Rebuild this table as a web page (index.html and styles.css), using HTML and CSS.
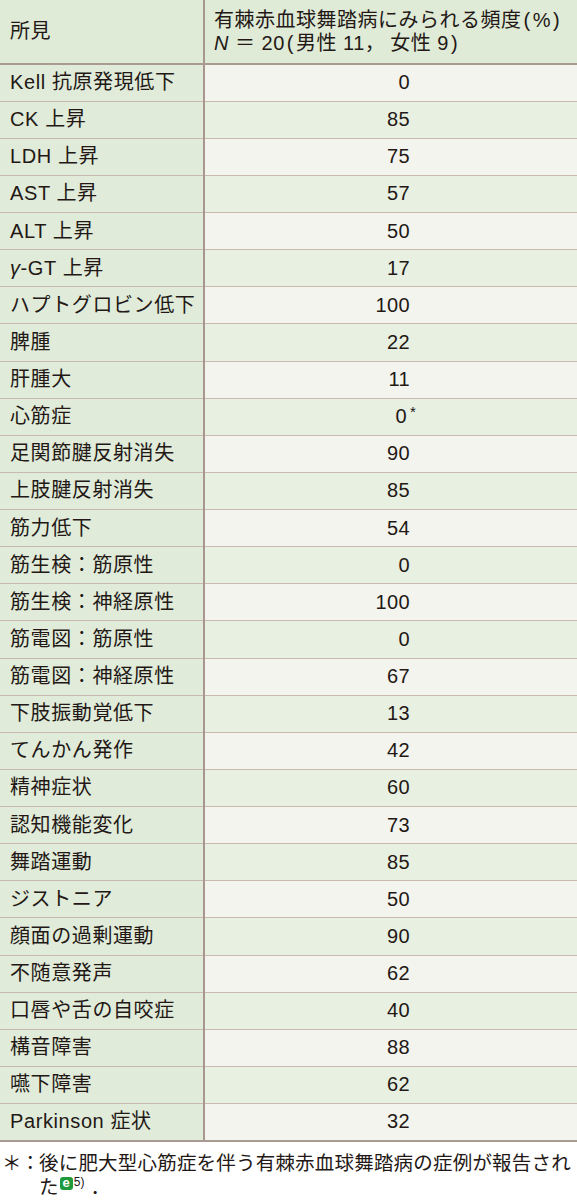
FILE: index.html
```html
<!DOCTYPE html>
<html lang="ja">
<head>
<meta charset="utf-8">
<link rel="stylesheet" href="styles.css">
</head>
<body>
<table class="tbl">
  <thead>
    <tr>
      <th class="c1">所見</th>
      <th class="c2">有棘赤血球舞踏病にみられる頻度<span class="par">(</span>%<span class="par">)</span><br><i>N</i> ＝ 20<span class="par">(</span>男性 11，<span class="gap"></span>女性 9<span class="par">)</span></th>
    </tr>
  </thead>
  <tbody>
    <tr><td class="c1">Kell 抗原発現低下</td><td class="c2">0</td></tr>
    <tr><td class="c1">CK 上昇</td><td class="c2">85</td></tr>
    <tr><td class="c1">LDH 上昇</td><td class="c2">75</td></tr>
    <tr><td class="c1">AST 上昇</td><td class="c2">57</td></tr>
    <tr><td class="c1">ALT 上昇</td><td class="c2">50</td></tr>
    <tr><td class="c1"><i>γ</i>-GT 上昇</td><td class="c2">17</td></tr>
    <tr><td class="c1">ハプトグロビン低下</td><td class="c2">100</td></tr>
    <tr><td class="c1">脾腫</td><td class="c2">22</td></tr>
    <tr><td class="c1">肝腫大</td><td class="c2">11</td></tr>
    <tr><td class="c1">心筋症</td><td class="c2">0<span class="ast">*</span></td></tr>
    <tr><td class="c1">足関節腱反射消失</td><td class="c2">90</td></tr>
    <tr><td class="c1">上肢腱反射消失</td><td class="c2">85</td></tr>
    <tr><td class="c1">筋力低下</td><td class="c2">54</td></tr>
    <tr><td class="c1">筋生検：筋原性</td><td class="c2">0</td></tr>
    <tr><td class="c1">筋生検：神経原性</td><td class="c2">100</td></tr>
    <tr><td class="c1">筋電図：筋原性</td><td class="c2">0</td></tr>
    <tr><td class="c1">筋電図：神経原性</td><td class="c2">67</td></tr>
    <tr><td class="c1">下肢振動覚低下</td><td class="c2">13</td></tr>
    <tr><td class="c1">てんかん発作</td><td class="c2">42</td></tr>
    <tr><td class="c1">精神症状</td><td class="c2">60</td></tr>
    <tr><td class="c1">認知機能変化</td><td class="c2">73</td></tr>
    <tr><td class="c1">舞踏運動</td><td class="c2">85</td></tr>
    <tr><td class="c1">ジストニア</td><td class="c2">50</td></tr>
    <tr><td class="c1">顔面の過剰運動</td><td class="c2">90</td></tr>
    <tr><td class="c1">不随意発声</td><td class="c2">62</td></tr>
    <tr><td class="c1">口唇や舌の自咬症</td><td class="c2">40</td></tr>
    <tr><td class="c1">構音障害</td><td class="c2">88</td></tr>
    <tr><td class="c1">嚥下障害</td><td class="c2">62</td></tr>
    <tr class="last"><td class="c1">Parkinson 症状</td><td class="c2">32</td></tr>
  </tbody>
</table>
<p class="note"><span class="mark">＊：</span><span class="body">後に肥大型心筋症を伴う有棘赤血球舞踏病の症例が報告された<span class="ebadge">e</span><sup class="ref">5)</sup> ．</span></p>
</body>
</html>
```

FILE: styles.css
```css
html, body {
  margin: 0;
  padding: 0;
  background: #ffffff;
}
body {
  width: 577px;
  font-family: "Liberation Sans", "Noto Sans CJK JP", sans-serif;
  color: #231815;
}
.tbl {
  width: 577px;
  border-collapse: collapse;
  table-layout: fixed;
  font-size: 20px;
  letter-spacing: 0.6px;
}
.tbl th, .tbl td {
  padding: 0;
  font-weight: normal;
  text-align: left;
  vertical-align: middle;
  line-height: 23px;
  white-space: nowrap;
}
.tbl thead tr {
  height: 64px;
}
.tbl thead th {
  background: #dfead7;
  border-bottom: 2px solid #a99a92;
}
.tbl th.c1 {
  width: 204px;
  padding-left: 10px;
  box-sizing: border-box;
}
.tbl th.c2 {
  padding-left: 9px;
  padding-top: 1px;
  letter-spacing: 0.5px;
}
.par {
  display: inline-block;
  padding: 0 2px;
}
.gap {
  display: inline-block;
  width: 5px;
}
.tbl .c1 {
  border-right: 2px solid #a8978f;
}
.tbl tbody tr {
  height: 37.14px;
}
.tbl tbody td {
  border-bottom: 1px solid #c9b8b0;
}
.tbl tbody td.c1 {
  background: #e0ebd9;
  padding-left: 10px;
}
.tbl tbody td.c2 {
  text-align: right;
  padding-right: 167px;
  letter-spacing: 0.4px;
}
.tbl tbody tr:nth-child(odd) td.c2 {
  background: #f3f4ee;
}
.tbl tbody tr:nth-child(even) td.c2 {
  background: #e8f0e2;
}
.tbl tbody tr.last td {
  border-bottom: 2px solid #a99a92;
}
.ast {
  display: inline-block;
  width: 0;
  position: relative;
  top: -6px;
  font-size: 15px;
  padding-left: 3px;
}
.note {
  margin: 9px 0 0 0;
  font-size: 19.5px;
  line-height: 24px;
  display: flex;
  padding-left: 2px;
}
.note .mark {
  flex: none;
  letter-spacing: -1px;
}
.note .body {
  flex: 1;
  letter-spacing: 0.2px;
}
.ebadge {
  display: inline-block;
  width: 13px;
  height: 13px;
  border-radius: 3px;
  background: #1e9a3c;
  color: #ffffff;
  font-size: 13px;
  line-height: 12px;
  text-align: center;
  font-weight: bold;
  vertical-align: 7px;
  margin-left: 1px;
  letter-spacing: 0;
}
.ref {
  font-size: 12px;
  vertical-align: 8px;
  line-height: 0;
  margin-left: 1px;
}
```
